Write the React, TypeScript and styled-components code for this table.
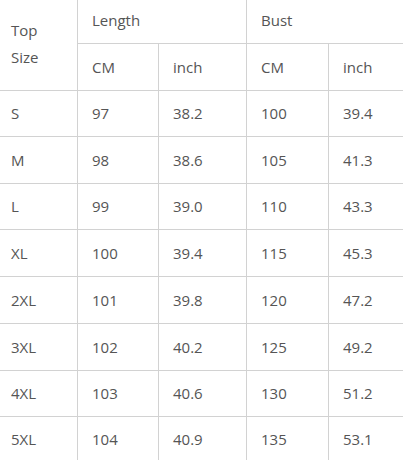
import React from "react";
import styled, { createGlobalStyle } from "styled-components";

const Global = createGlobalStyle`
  html, body { margin: 0; padding: 0; background: #ffffff; }
  body { font-family: "Open Sans", "Noto Sans", sans-serif; }
`;

const Grid = styled.div`
  display: grid;
  width: 403px;
  grid-template-columns: 78px 81px 88px 82px 74px;
  grid-template-rows: 44px 47px 46px 47px 46px 47px 47px 47px 46px 44px;
  font-family: "Open Sans", "Noto Sans", sans-serif;
  font-size: 15px;
  color: #555555;
`;

const Cell = styled.div<{ $first?: boolean; $last?: boolean; $noBottom?: boolean }>`
  box-sizing: border-box;
  display: flex;
  align-items: center;
  padding-left: ${(p) => (p.$first ? "11px" : "14px")};
  padding-bottom: 1px;
  border-right: ${(p) => (p.$last ? "none" : "1px solid #d2d2d2")};
  border-bottom: ${(p) => (p.$noBottom ? "none" : "1px solid #d2d2d2")};
  line-height: 20px;
  white-space: nowrap;
`;

const CornerCell = styled(Cell)`
  grid-row: 1 / span 2;
  grid-column: 1;
  line-height: 27px;
  padding-bottom: 2px;
`;

const GroupCell = styled(Cell)<{ $col: number }>`
  grid-row: 1;
  grid-column: ${(p) => p.$col} / span 2;
  padding-bottom: 4px;
`;

const rows: [string, string, string, string, string][] = [
  ["S", "97", "38.2", "100", "39.4"],
  ["M", "98", "38.6", "105", "41.3"],
  ["L", "99", "39.0", "110", "43.3"],
  ["XL", "100", "39.4", "115", "45.3"],
  ["2XL", "101", "39.8", "120", "47.2"],
  ["3XL", "102", "40.2", "125", "49.2"],
  ["4XL", "103", "40.6", "130", "51.2"],
  ["5XL", "104", "40.9", "135", "53.1"],
];

export default function App() {
  return (
    <>
      <Global />
      <Grid>
        <CornerCell $first>
          Top
          <br />
          Size
        </CornerCell>
        <GroupCell $col={2}>Length</GroupCell>
        <GroupCell $col={4} $last>
          Bust
        </GroupCell>
        <Cell>CM</Cell>
        <Cell>inch</Cell>
        <Cell>CM</Cell>
        <Cell $last>inch</Cell>
        {rows.map((r, i) =>
          r.map((v, j) => (
            <Cell
              key={`${i}-${j}`}
              $first={j === 0}
              $last={j === 4}
              $noBottom={i === rows.length - 1}
            >
              {v}
            </Cell>
          ))
        )}
      </Grid>
    </>
  );
}
